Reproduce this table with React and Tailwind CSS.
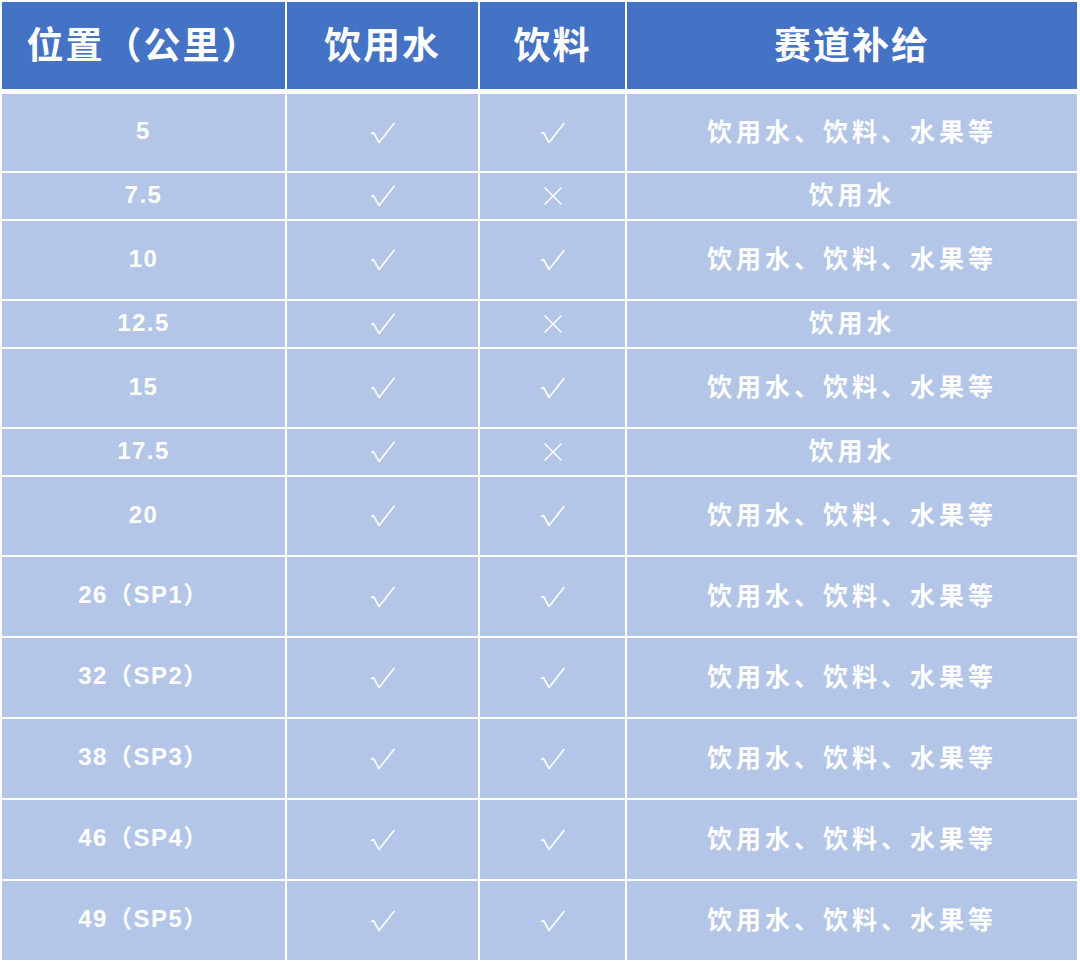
import React from 'react';

const rows = [
  { km: '5', water: true, drink: true, supply: '饮用水、饮料、水果等', h: 'h-[77px]' },
  { km: '7.5', water: true, drink: false, supply: '饮用水', h: 'h-[46px]' },
  { km: '10', water: true, drink: true, supply: '饮用水、饮料、水果等', h: 'h-[78px]' },
  { km: '12.5', water: true, drink: false, supply: '饮用水', h: 'h-[46px]' },
  { km: '15', water: true, drink: true, supply: '饮用水、饮料、水果等', h: 'h-[78px]' },
  { km: '17.5', water: true, drink: false, supply: '饮用水', h: 'h-[46px]' },
  { km: '20', water: true, drink: true, supply: '饮用水、饮料、水果等', h: 'h-[78px]' },
  { km: '26（SP1）', water: true, drink: true, supply: '饮用水、饮料、水果等', h: 'h-[79px]' },
  { km: '32（SP2）', water: true, drink: true, supply: '饮用水、饮料、水果等', h: 'h-[79px]' },
  { km: '38（SP3）', water: true, drink: true, supply: '饮用水、饮料、水果等', h: 'h-[79px]' },
  { km: '46（SP4）', water: true, drink: true, supply: '饮用水、饮料、水果等', h: 'h-[79px]' },
  { km: '49（SP5）', water: true, drink: true, supply: '饮用水、饮料、水果等', h: 'h-[79px]' },
];

const Check = () => (
  <svg width="25" height="22" viewBox="0 0 25 22" fill="none" className="text-white">
    <path d="M1.5 11.5 L3.5 10.5 L9 20.5 L24 1.5" stroke="currentColor" strokeWidth="1.6" strokeLinejoin="round" strokeLinecap="round" />
  </svg>
);

const Cross = () => (
  <svg width="18" height="18" viewBox="0 0 18 18" fill="none" className="text-white">
    <path d="M1 1 L17 17 M17 1 L1 17" stroke="currentColor" strokeWidth="1.5" strokeLinecap="round" />
  </svg>
);

const cjk = { fontFamily: '"Noto Sans CJK SC", "Noto Sans", sans-serif' };
const num = { fontFamily: '"Liberation Sans", "Noto Sans CJK SC", sans-serif' };

const App = () => {
  return (
    <div className="w-[1080px] h-[962px] bg-white pt-[2px] pl-[2px]" style={cjk}>
      <div className="grid grid-cols-[283px_191px_145px_450px] gap-x-[2px] w-[1075px]">
        {/* Header */}
        {['位置（公里）', '饮用水', '饮料', '赛道补给'].map((t) => (
          <div
            key={t}
            className="h-[87px] pb-[4px] bg-[#4472c4] flex items-center justify-center text-white text-[37px] font-bold tracking-[2px]"
          >
            {t}
          </div>
        ))}
      </div>

      <div className="mt-[5px] flex flex-col gap-y-[2px] w-[1075px]">
        {rows.map((r, i) => (
          <div key={i} className={`grid grid-cols-[283px_191px_145px_450px] gap-x-[2px] ${r.h}`}>
            <div
              className="bg-[#b4c6e7] pb-[3px] flex items-center justify-center text-white text-[24px] font-bold tracking-[1.5px]"
              style={num}
            >
              {r.km}
            </div>
            <div className="bg-[#b4c6e7] flex items-center justify-center">
              {r.water ? <Check /> : <Cross />}
            </div>
            <div className="bg-[#b4c6e7] flex items-center justify-center">
              {r.drink ? <Check /> : <Cross />}
            </div>
            <div className="bg-[#b4c6e7] pb-[4px] flex items-center justify-center text-white text-[25px] font-bold tracking-[4px]">
              {r.supply}
            </div>
          </div>
        ))}
      </div>
    </div>
  );
};

export default App;
